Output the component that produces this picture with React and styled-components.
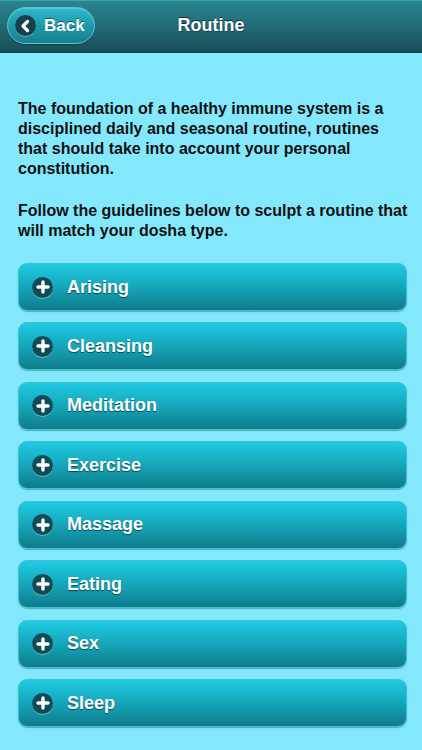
import React from "react";
import styled, { createGlobalStyle } from "styled-components";

const GlobalStyle = createGlobalStyle`
  html, body {
    margin: 0;
    padding: 0;
    background: #84e8fc;
  }
  body {
    font-family: "Liberation Sans", Arial, sans-serif;
  }
`;

const items = ["Arising", "Cleansing", "Meditation", "Exercise", "Massage", "Eating", "Sex", "Sleep"];

const App = () => {
  return (
    <>
      <GlobalStyle />
      <Page>
        <Header>
          <BackButton>
            <BackIcon>
              <svg width="20" height="20" viewBox="0 0 20 20">
                <path d="M11.5 5.5 L7 10 L11.5 14.5" fill="none" stroke="#fff" strokeWidth="3.2" strokeLinecap="round" strokeLinejoin="round" />
              </svg>
            </BackIcon>
            <BackLabel>Back</BackLabel>
          </BackButton>
          <Title>Routine</Title>
        </Header>

        <Content>
          <Intro>
            The foundation of a healthy immune system is a disciplined daily and seasonal routine, routines that should take into account your personal constitution.
          </Intro>
          <Intro>
            Follow the guidelines below to sculpt a routine that will match your dosha type.
          </Intro>

          <List>
            {items.map((item) => (
              <Item key={item}>
                <PlusIcon>
                  <svg width="20" height="20" viewBox="0 0 20 20">
                    <path d="M10 5 V15 M5 10 H15" stroke="#fff" strokeWidth="3.4" strokeLinecap="round" />
                  </svg>
                </PlusIcon>
                <ItemLabel>{item}</ItemLabel>
              </Item>
            ))}
          </List>
        </Content>
      </Page>
    </>
  );
};

export default App;

const Page = styled.div`
  width: 422px;
  min-height: 750px;
  background: #84e8fc;
`;

const Header = styled.header`
  position: relative;
  height: 50px;
  display: flex;
  align-items: center;
  justify-content: center;
  background: linear-gradient(#2a8590 0%, #226b75 50%, #1b4f58 100%);
  border-top: 1px solid #3aa2a8;
  border-bottom: 2px solid #17474f;
`;

const BackButton = styled.button`
  position: absolute;
  left: 7px;
  top: 6px;
  height: 37px;
  width: 88px;
  box-sizing: border-box;
  display: flex;
  align-items: center;
  gap: 8px;
  padding: 0 0 0 7px;
  border-radius: 19px;
  border: 1px solid #5cc4cf;
  background: linear-gradient(#2cb8cb 0%, #1d97a8 55%, #177f8d 100%);
  box-shadow: inset 0 1px 0 rgba(255, 255, 255, 0.25), 0 1px 1px rgba(0, 0, 0, 0.3);
  cursor: pointer;
`;

const BackIcon = styled.span`
  width: 21px;
  height: 21px;
  border-radius: 50%;
  background: #14424a;
  display: flex;
  align-items: center;
  justify-content: center;
  box-shadow: 0 1px 0 rgba(255, 255, 255, 0.3);
`;

const BackLabel = styled.span`
  color: #fff;
  font-family: "Liberation Sans", Arial, sans-serif;
  font-weight: bold;
  font-size: 17px;
  text-shadow: 0 -1px 0 rgba(0, 0, 0, 0.45);
`;

const Title = styled.h1`
  margin: 0 0 2px;
  color: #fff;
  font-size: 18px;
  font-weight: bold;
  text-shadow: 0 -1px 0 rgba(0, 0, 0, 0.6), 1px 1px 0 rgba(0, 0, 0, 0.3);
`;

const Content = styled.main`
  padding: 46px 14px 20px 18px;
`;

const Intro = styled.p`
  margin: 0 0 22px;
  font-size: 16px;
  line-height: 20px;
  font-weight: bold;
  color: #111;
`;

const List = styled.div`
  display: flex;
  flex-direction: column;
  gap: 11.45px;
  margin-top: 3px;
  width: 389px;
`;

const Item = styled.div`
  height: 48px;
  box-sizing: border-box;
  display: flex;
  align-items: center;
  gap: 14px;
  padding-left: 13px;
  border-radius: 9px;
  border: 1px solid #3fbfd0;
  background: linear-gradient(#1ecbe3 0%, #16a6ba 50%, #0e7c8b 100%);
  box-shadow: 0 1px 1px rgba(0, 60, 70, 0.35);
`;

const PlusIcon = styled.span`
  width: 21px;
  height: 21px;
  border-radius: 50%;
  background: #0f4c56;
  display: flex;
  align-items: center;
  justify-content: center;
  box-shadow: 0 1px 0 rgba(255, 255, 255, 0.35);
`;

const ItemLabel = styled.span`
  color: #fff;
  font-size: 18px;
  font-weight: bold;
  text-shadow: 0 1px 1px rgba(0, 0, 0, 0.55);
`;
